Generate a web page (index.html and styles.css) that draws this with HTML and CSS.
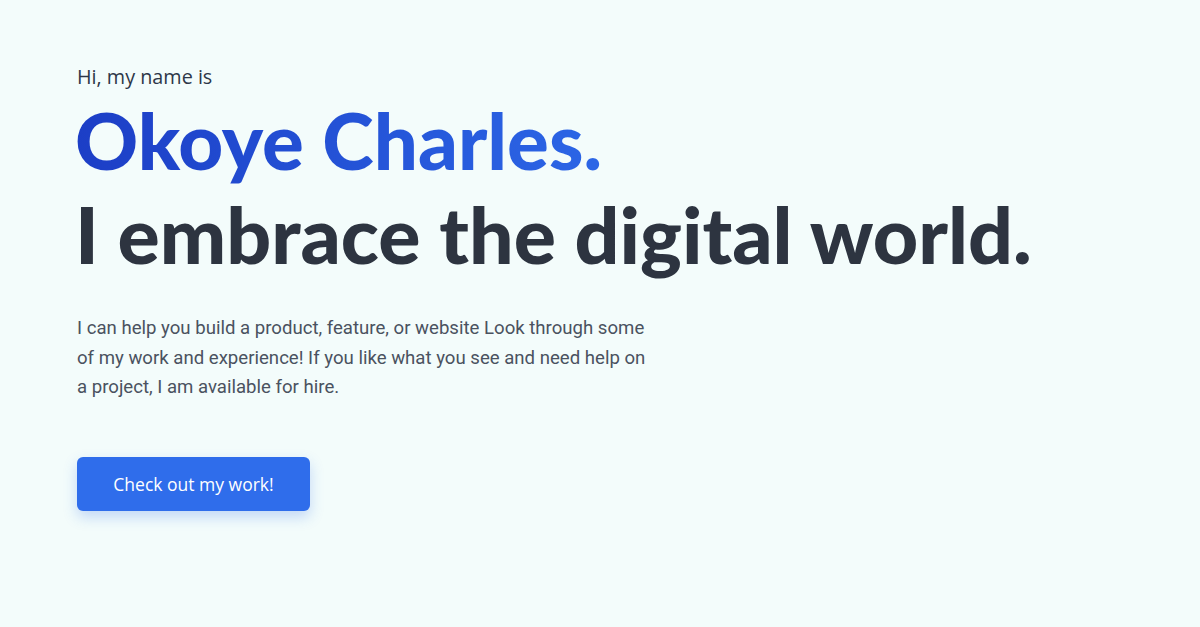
FILE: index.html
```html
<!DOCTYPE html>
<html lang="en">
<head>
<meta charset="utf-8">
<title>Okoye Charles</title>
<link rel="stylesheet" href="styles.css">
</head>
<body>
<main class="hero">
  <p class="intro">Hi, my name is</p>
  <h1 class="name">Okoye Charles.</h1>
  <h2 class="tagline">I embrace the digital world.</h2>
  <p class="about">I can help you build a product, feature, or website Look through some of my work and experience! If you like what you see and need help on a project, I am available for hire.</p>
  <a class="cta" href="#work">Check out my work!</a>
</main>
</body>
</html>
```
FILE: styles.css
```css
html, body {
  margin: 0;
  padding: 0;
  background: #f3fcfb;
}
body {
  font-family: Lato, "Open Sans", "Liberation Sans", sans-serif;
  height: 627px;
  overflow: hidden;
}
.hero {
  padding: 62px 0 0 77px;
  display: flex;
  flex-direction: column;
  align-items: flex-start;
}
.intro {
  margin: 0;
  font-family: "Open Sans", sans-serif;
  font-size: 19.8px;
  line-height: 30px;
  color: #2d3748;
  font-weight: 500;
}
.name {
  margin: 2px 0 0 -2px;
  font-size: 78px;
  line-height: 92px;
  font-weight: 900;
  background: linear-gradient(90deg, #1c3ec6, #2c66e6);
  -webkit-background-clip: text;
  background-clip: text;
  color: transparent;
}
.tagline {
  margin: 2px 0 0 -2px;
  font-size: 78.8px;
  line-height: 92px;
  font-weight: 900;
  color: #2d3440;
}
.about {
  margin: 34px 0 0 0;
  width: 576px;
  font-family: Roboto, "Liberation Sans", sans-serif;
  font-size: 18.6px;
  line-height: 29.5px;
  color: #4a5260;
}
.cta {
  margin-top: 54px;
  width: 233px;
  height: 54px;
  display: flex;
  align-items: center;
  justify-content: center;
  background: #2f6deb;
  color: #fff;
  border-radius: 6px;
  font-family: "Open Sans", sans-serif;
  font-size: 17.5px;
  text-decoration: none;
  box-shadow: 0 6px 14px rgba(47, 109, 235, 0.25);
}
```
